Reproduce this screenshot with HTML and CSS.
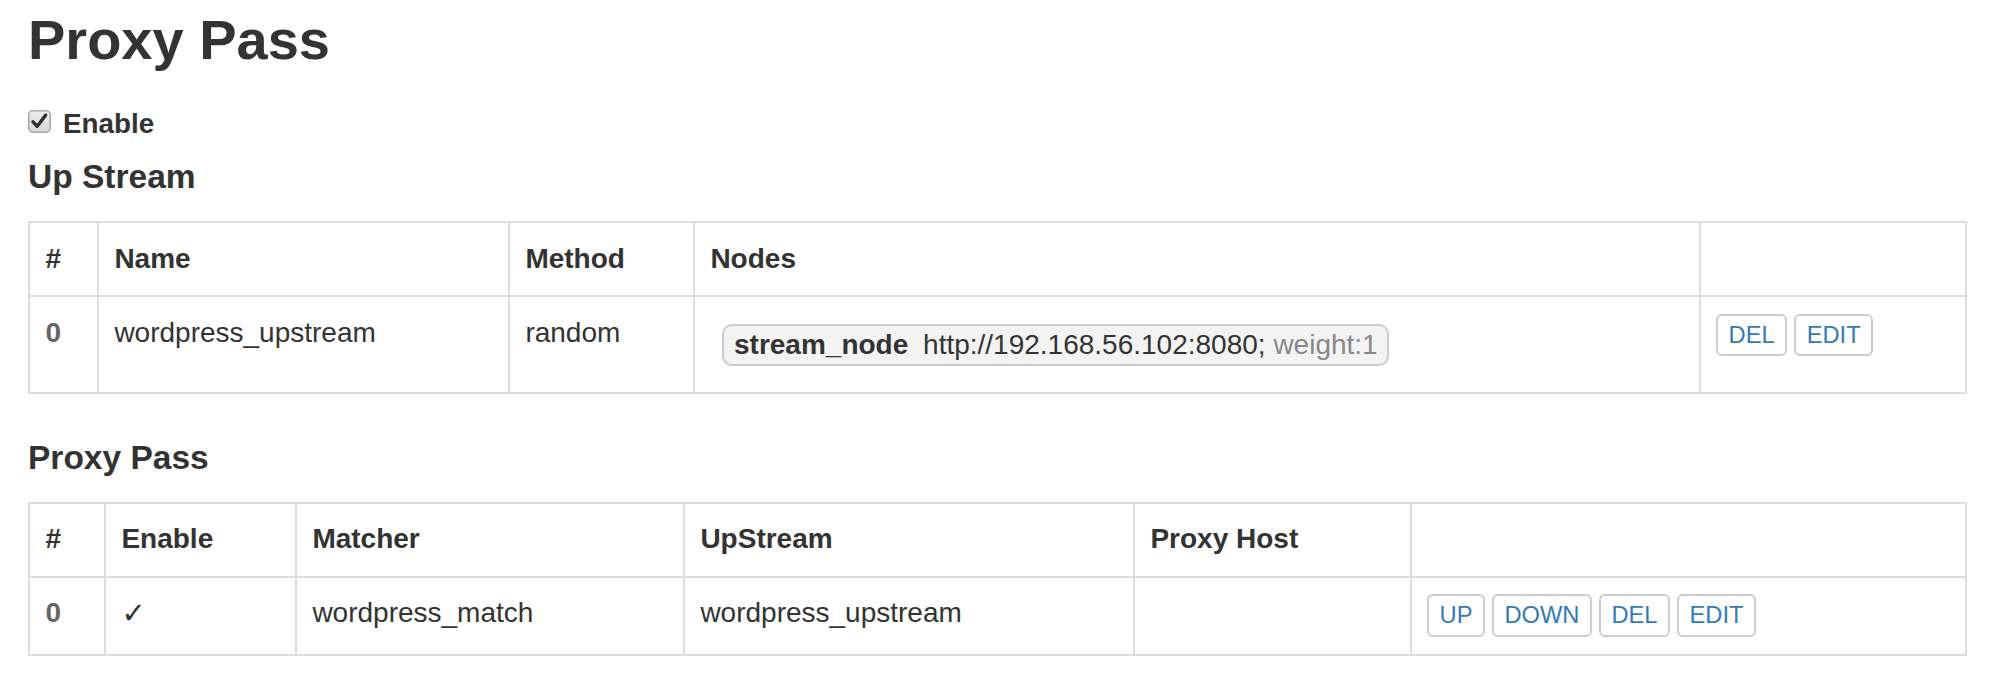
FILE: index.html
```html
<!DOCTYPE html>
<html lang="en">
<head>
<meta charset="utf-8">
<title>Proxy Pass</title>
<link rel="stylesheet" href="styles.css">
</head>
<body>
<div class="page">
  <h1 class="title">Proxy Pass</h1>
  <div class="check-row">
    <label class="check">
      <svg class="checkbox" width="23" height="23" viewBox="0 0 23 23" aria-hidden="true">
        <defs>
          <linearGradient id="cbg" x1="0" y1="0" x2="0" y2="1">
            <stop offset="0" stop-color="#ededed"/>
            <stop offset="1" stop-color="#d6d6d6"/>
          </linearGradient>
        </defs>
        <rect x="0.75" y="0.75" width="21.5" height="21.5" rx="4" ry="4" fill="url(#cbg)" stroke="#a9a9a9" stroke-width="1.5"/>
        <path d="M5 11.8 L9.2 16.3 L17.6 5.2" fill="none" stroke="#2b2b2b" stroke-width="3.4" stroke-linecap="round" stroke-linejoin="round"/>
      </svg>Enable
    </label>
  </div>

  <h3 class="section">Up Stream</h3>
  <table class="grid">
    <colgroup>
      <col class="u-idx"><col class="u-name"><col class="u-method"><col class="u-nodes"><col class="u-act">
    </colgroup>
    <thead>
      <tr><th>#</th><th>Name</th><th>Method</th><th>Nodes</th><th></th></tr>
    </thead>
    <tbody>
      <tr>
        <td class="idx">0</td>
        <td>wordpress_upstream</td>
        <td>random</td>
        <td>
          <div class="nodes">
            <span class="node"><strong class="node-name">stream_node</strong> http://192.168.56.102:8080; <span class="weight">weight:1</span></span>
          </div>
        </td>
        <td>
          <div class="actions">
            <button class="btn">DEL</button>
            <button class="btn">EDIT</button>
          </div>
        </td>
      </tr>
    </tbody>
  </table>

  <h3 class="section">Proxy Pass</h3>
  <table class="grid">
    <colgroup>
      <col class="p-idx"><col class="p-enable"><col class="p-matcher"><col class="p-up"><col class="p-host"><col class="p-act">
    </colgroup>
    <thead>
      <tr><th>#</th><th>Enable</th><th>Matcher</th><th>UpStream</th><th>Proxy Host</th><th></th></tr>
    </thead>
    <tbody>
      <tr>
        <td class="idx">0</td>
        <td><span class="tick">✓</span></td>
        <td>wordpress_match</td>
        <td>wordpress_upstream</td>
        <td></td>
        <td>
          <div class="actions">
            <button class="btn">UP</button>
            <button class="btn">DOWN</button>
            <button class="btn">DEL</button>
            <button class="btn">EDIT</button>
          </div>
        </td>
      </tr>
    </tbody>
  </table>
</div>
</body>
</html>
```

FILE: styles.css
```css
html, body {
  margin: 0;
  padding: 0;
  background: #fff;
}

body {
  font-family: "Liberation Sans", Arial, Helvetica, sans-serif;
  font-size: 28px;
  line-height: 38.6px;
  color: #333;
}

.page {
  padding: 0 49px 0 28px;
}

.title {
  font-size: 56px;
  line-height: 60.5px;
  font-weight: bold;
  margin: 10px 0 34.9px;
}

.check-row {
  margin: 0;
  line-height: 38.6px;
}

.check {
  font-weight: bold;
  font-size: 27.8px;
}

.checkbox {
  vertical-align: baseline;
  margin-right: 12px;
}

.section {
  font-size: 33.5px;
  line-height: 36.3px;
  font-weight: bold;
  margin: 15.4px 0 25.6px;
}

.grid + .section {
  margin-top: 45.4px;
}

.grid {
  width: 1939px;
  border-collapse: collapse;
  table-layout: fixed;
  margin: 0 0 45.4px;
}

.grid th,
.grid td {
  border: 2px solid #ddd;
  padding: 16.7px 15.4px;
  text-align: left;
  vertical-align: top;
  line-height: 38.6px;
  font-size: 28px;
}

.grid th {
  font-weight: bold;
}

.grid td.idx {
  font-weight: bold;
  color: #666;
}

/* Up Stream columns */
.u-idx { width: 69px; }
.u-name { width: 411px; }
.u-method { width: 185px; }
.u-nodes { width: 1006px; }
.u-act { width: 266px; }

/* Proxy Pass columns */
.p-idx { width: 76px; }
.p-enable { width: 191px; }
.p-matcher { width: 388px; }
.p-up { width: 450px; }
.p-host { width: 277px; }
.p-act { width: 555px; }

.nodes {
  display: flex;
}

.node {
  display: inline-block;
  margin: 9.6px 10px 9.6px 12px;
  padding: 0 9.6px;
  border: 2px solid #ccc;
  border-radius: 10px;
  background: #f3f3f3;
  line-height: 38.6px;
  font-size: 28px;
  white-space: nowrap;
  color: #333;
}

.node-name {
  font-weight: bold;
  margin-right: 7px;
}

.weight {
  color: #888;
}

.tick {
  font-family: "DejaVu Sans", sans-serif;
  font-size: 29px;
  color: #333;
}

.actions {
  display: flex;
  gap: 7.6px;
}

.btn {
  font-family: "Liberation Sans", Arial, Helvetica, sans-serif;
  font-size: 23.7px;
  line-height: 34.7px;
  padding: 1.9px 10.2px;
  border: 2px solid #ccc;
  border-radius: 5.8px;
  background: #fff;
  color: #337ab7;
  margin: 0;
  cursor: pointer;
}
```
